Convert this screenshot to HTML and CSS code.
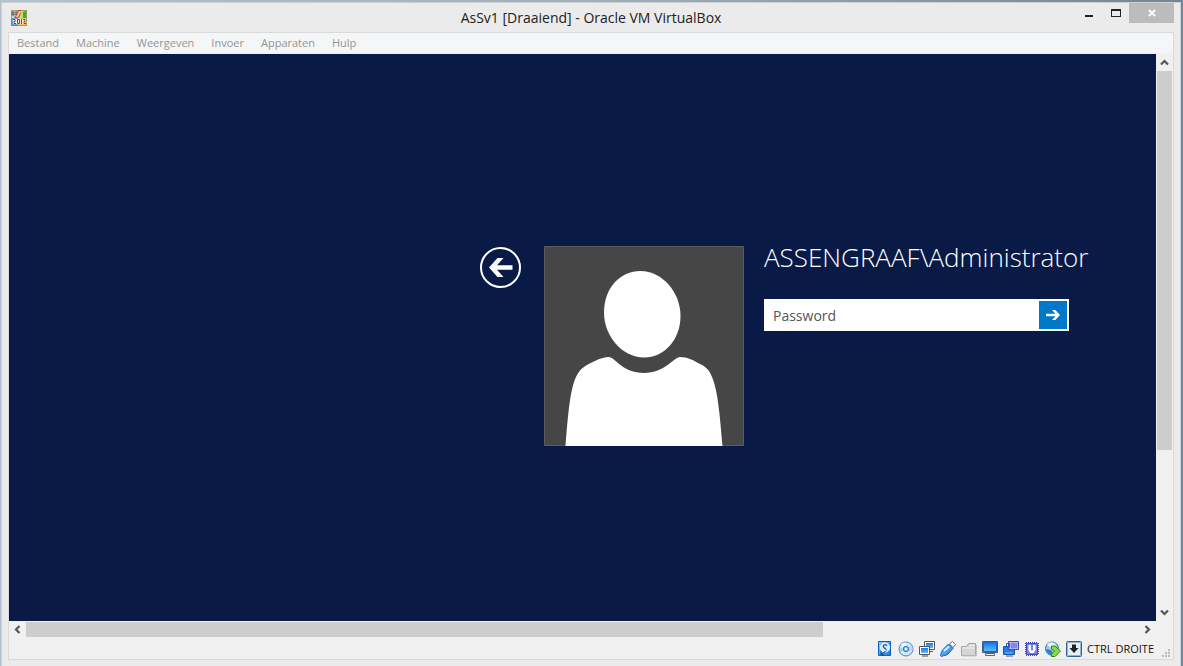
FILE: index.html
```html
<!DOCTYPE html>
<html lang="nl">
<head>
<meta charset="utf-8">
<title>AsSv1 [Draaiend] - Oracle VM VirtualBox</title>
<link rel="stylesheet" href="styles.css">
</head>
<body>
<div class="window">
  <header class="titlebar">
    <svg class="app-icon" width="16" height="16" viewBox="0 0 16 16" aria-hidden="true">
      <rect width="16" height="16" fill="#ecd0b4"/>
      <rect width="7" height="7" fill="#d8d4cf"/>
      <path d="M7 0h5L8 8H3z" fill="#e2552c"/>
      <path d="M8 1l2 0-3 6H5z" fill="#f6c9a8"/>
      <path d="M10 0h6v9H9z" fill="#b5dd78"/>
      <path d="M12 2l3-1v7h-3z" fill="#3fae25"/>
      <path d="M0 8h7v8H0z" fill="#58a8e8"/>
      <path d="M7 9h9v7H7z" fill="#f0c45c"/>
      <path d="M1 2h2v3H1zM4 2h2M4 4h2" fill="none" stroke="#4a4644"/>
      <rect x="2" y="9" width="13" height="5" fill="#fbe9de"/>
      <path d="M2 9.500h2v2H3v2h2M6.500 9.500h2v4h-2zM10.500 9v5M12 9.500h2v2h-1v2h2" fill="none" stroke="#a03434"/>
      <path d="M.5 .5h15v15H.5z" fill="none" stroke="#8a6040" stroke-opacity=".5"/>
    </svg>
    <h1 class="title">AsSv1 [Draaiend] - Oracle VM VirtualBox</h1>
    <div class="window-buttons">
      <button class="win-btn" aria-label="Minimaliseren"><svg width="10" height="10" viewBox="0 0 10 10"><path d="M1 7h8v2H1z" fill="#222"/></svg></button>
      <button class="win-btn" aria-label="Maximaliseren"><svg width="10" height="10" viewBox="0 0 10 10"><path d="M0 1h10v8H0zM1 3v5h8V3z" fill="#222" fill-rule="evenodd"/></svg></button>
      <button class="win-btn close" aria-label="Sluiten"><svg width="8" height="8" viewBox="0 0 8 8"><path d="M.8 .8l6.400 6.400M7.200 .8L.8 7.200" stroke="#fff" stroke-width="1.900"/></svg></button>
    </div>
  </header>
  <div class="frame">
    <nav class="menubar">
      <button>Bestand</button><button>Machine</button><button>Weergeven</button><button>Invoer</button><button>Apparaten</button><button>Hulp</button>
    </nav>
    <div class="viewport">
      <main class="guest">
        <button class="back" aria-label="Back">
          <svg width="42" height="42" viewBox="0 0 42 42"><circle cx="20.500" cy="21.500" r="19.500" fill="none" stroke="#fff" stroke-width="2"/><path d="M9 21.500L17.500 12h6L17 19.200H32.500v4.600H17L23.500 31h-6z" fill="#fff"/></svg>
        </button>
        <svg class="avatar" width="200" height="200" viewBox="0 0 200 200" role="img" aria-label="Administrator">
          <path d="M.5 .5h199v199H.5z" fill="#464646" stroke="#5c5c5c"/>
          <path d="M96.500 25C118 25 136.500 46 136.500 70C136.500 94 120 111.500 100 111.500C78 111.500 60 90 60 66.500C60 42 76 25 96.500 25z" fill="#fff"/>
          <path d="M21.500 200C24 169 26 144 32 131C36 122 42 119 51 115C57 112 61 111 65 111C71 111 78 127 100 127C121 127 130 111 136 111C143 111 149 114 154 117C161 120 165 123 168 131C174 145 176 171 178.500 200z" fill="#fff"/>
        </svg>
        <form class="login">
          <h2 class="user">ASSENGRAAF\Administrator</h2>
          <div class="field">
            <input type="password" placeholder="Password" aria-label="Password">
            <button type="button" class="submit" aria-label="Submit"><svg width="14" height="12" viewBox="0 0 14 12"><path d="M0 4.800h9.500L6 1h3.300L14 6 9.300 11H6l3.500-3.800H0z" fill="#fff"/></svg></button>
          </div>
        </form>
      </main>
      <div class="scroll vertical">
        <button aria-label="Omhoog"><svg width="9" height="7" viewBox="0 0 9 7"><path d="M1 5.500l3.500-3.500L8 5.500" fill="none" stroke="#555" stroke-width="2.200"/></svg></button>
        <div class="track"><div class="thumb"></div></div>
        <button aria-label="Omlaag"><svg width="9" height="7" viewBox="0 0 9 7"><path d="M1 1.500L4.500 5 8 1.500" fill="none" stroke="#555" stroke-width="2.200"/></svg></button>
      </div>
      <div class="scroll horizontal">
        <button aria-label="Links"><svg width="7" height="9" viewBox="0 0 7 9"><path d="M5.500 1L2 4.500 5.500 8" fill="none" stroke="#555" stroke-width="2.200"/></svg></button>
        <div class="track"><div class="thumb"></div></div>
        <button aria-label="Rechts"><svg width="7" height="9" viewBox="0 0 7 9"><path d="M1.500 1L5 4.500 1.500 8" fill="none" stroke="#555" stroke-width="2.200"/></svg></button>
      </div>
    </div>
    <footer class="status">
      <svg width="0" height="0" class="defs" aria-hidden="true">
        <linearGradient id="blue" x1="0" y1="0" x2="1" y2="1"><stop stop-color="#8fceff"/><stop offset="1" stop-color="#1479e6"/></linearGradient>
        <linearGradient id="screen" x1="0" y1="0" x2="0" y2="1"><stop stop-color="#1a78e4"/><stop offset="1" stop-color="#5cbcff"/></linearGradient>
      </svg>
      <svg width="16" height="16" viewBox="0 0 16 16"><path d="M1.500 .5h12v14h-12z" fill="url(#blue)" stroke="#0b62c4"/><circle cx="8" cy="6.500" r="4.500" fill="#cfe8ff" stroke="#fff"/><path d="M10 4.500c-2-2-5 0-3 2s3 2 1 4L4 13.500M4 10v3.500h3" fill="none" stroke="#1457a0" stroke-width="1.200"/><path d="M5 11l4-2" stroke="#fff"/></svg>
      <svg width="16" height="16" viewBox="0 0 16 16"><circle cx="8" cy="8" r="7" fill="#cfe8fc" stroke="#4a86c2"/><path d="M8 8L3 3.500A7 7 0 0 1 8 1.500z" fill="#f8ffff"/><path d="M8 8l6-3a6 6 0 0 1 0 5z" fill="#e4c4ef"/><path d="M8 8l-5.500 3a6 6 0 0 1-.5-4z" fill="#9edcc5"/><circle cx="8" cy="8" r="2.700" fill="#71bcf8" stroke="#2f7bcb"/><circle cx="8" cy="8" r="1.200" fill="#fff"/></svg>
      <svg width="16" height="16" viewBox="0 0 16 16"><path d="M5.500 .5h10v8h-10z" fill="#fff" stroke="#555"/><path d="M7 2h7v5H7z" fill="url(#screen)"/><path d="M9 10.500h5" stroke="#555"/><path d="M.5 5.500h10v8H.5z" fill="#fff" stroke="#555"/><path d="M2 7h7v5H2z" fill="url(#screen)"/><path d="M3 15h6" stroke="#555"/></svg>
      <svg width="16" height="16" viewBox="0 0 16 16"><path d="M9.500 3L12.500 .5l3 3L13 6.500z" fill="#fff" stroke="#666"/><path d="M8.500 3l4.500 4.500-5 5.500c-2 2-4 1-6.500 2.500l-1-1c1-2 .5-4 2.500-6z" fill="url(#blue)" stroke="#0b62c4"/><path d="M4 10l5-4.500" stroke="#d8efff" stroke-width="1.800"/></svg>
      <svg width="16" height="16" viewBox="0 0 16 16"><path d="M.5 14.500v-9h5l2-3h7v12z" fill="#d5d5d5" stroke="#a6a6a6"/><path d="M8 4.500h6M1.500 7h12" stroke="#f1f1f1"/><path d="M15.500 4v11H2" fill="none" stroke="#c4c4c4"/></svg>
      <svg width="16" height="16" viewBox="0 0 16 16"><path d="M.5 .5h15v11H.5z" fill="#fff" stroke="#3c5a80"/><path d="M1.500 1.500h13v9h-13z" fill="url(#screen)" stroke="#0f6fd8"/><path d="M3.500 12.500h9v2h-9z" fill="#eee" stroke="#666"/></svg>
      <svg width="16" height="16" viewBox="0 0 16 16"><path d="M.5 5.500h11v8H.5z" fill="#1f7ee6" stroke="#1a55a0"/><path d="M2 12h8" stroke="#6cc0ff"/><path d="M5.500 .5h10v8h-10z" fill="#b3b3f3" stroke="#4649bf"/><path d="M8 2h6v5H8z" fill="#8386e6"/><path d="M3.500 5V2.500h3v4M3 15h7" stroke="#335b90" fill="none"/></svg>
      <svg width="16" height="16" viewBox="0 0 16 16"><path d="M2 1.500h12M2 14.500h12M1.500 2v12M14.500 2v12" stroke="#3f46b8" stroke-dasharray="1 1"/><path d="M2.500 2.500h11v11h-11z" fill="#7b83e6" stroke="#4148c2"/><path d="M4.500 4h7v5.500L9.500 12h-3l-2-2.500zM7 4v5.500h2V4z" fill="#fff" fill-rule="evenodd"/></svg>
      <svg width="16" height="16" viewBox="0 0 16 16"><circle cx="7" cy="7.500" r="6.500" fill="#97caf5" stroke="#3474ad"/><path d="M2 4c3-4 7-3 9 0L7 7z" fill="#eef7ff"/><path d="M1 8l5 1 3 5-3 .5C3 14 1 11 1 8z" fill="#377fc4"/><path d="M6.500 5h3.500L15.500 10 10 15.500H6.500V13l3-3-3-2z" fill="#86df3c" stroke="#2d8518"/></svg>
      <svg width="16" height="16" viewBox="0 0 16 16"><rect x=".5" y=".5" width="15" height="15" rx="1" fill="#e4f0fa" stroke="#2f6299"/><path d="M1.500 1.500h13v13h-13z" fill="none" stroke="#8fb2d3"/><path d="M6 3.500h4V7h2.500L8 12 3.500 7H6z" fill="#222"/></svg>
      <span class="host-key">CTRL DROITE</span>
      <svg class="grip" width="9" height="9" viewBox="0 0 9 9"><path d="M6 0h2v2H6zM3 3h2v2H3zM6 3h2v2H6zM0 6h2v2H0zM3 6h2v2H3zM6 6h2v2H6z" fill="#bcbcbc"/></svg>
    </footer>
  </div>
</div>
</body>
</html>
```
FILE: styles.css
```css
* { box-sizing: border-box; }

body {
  margin: 0;
  height: 100vh;
  padding: 2px 2px 0 1px;
  display: flex;
  background: linear-gradient(90deg, #b3c1d3, #a0afbd 50%, #6f879b);
  font-family: "Open Sans", "Noto Sans", sans-serif;
  overflow: hidden;
}

button {
  padding: 0;
  border: 0;
  background: none;
  font: inherit;
  color: inherit;
  display: flex;
  align-items: center;
  justify-content: center;
}

svg { display: block; flex: none; }

.window {
  flex: 1;
  min-width: 0;
  display: flex;
  flex-direction: column;
  padding: 0 6px 6px;
  background: #ebebeb;
  border: 1px solid #d0d0d0;
  border-bottom: 0;
}

.titlebar {
  height: 29px;
  display: grid;
  grid-template-columns: 1fr auto 1fr;
  align-items: center;
}

.app-icon { margin-left: 3px; }

.title {
  margin: 0;
  font-size: 14px;
  font-weight: 400;
  color: #222;
  white-space: nowrap;
}

.window-buttons {
  display: flex;
  align-self: start;
  justify-self: end;
}

.win-btn { width: 27px; height: 20px; }
.win-btn.close { width: 45px; background: #bcbcbc; }

.frame {
  flex: 1;
  min-height: 0;
  display: flex;
  flex-direction: column;
  background: #f0f0f0;
  border: 1px solid #d9d9db;
}

.menubar {
  display: flex;
  gap: 17px;
  height: 21px;
  padding: 0 8px 2px;
  background: #f5f6f7;
  border-bottom: 1px solid #f0f0f0;
  color: #949494;
  font-size: 11px;
}

.viewport {
  flex: 1;
  min-height: 0;
  display: grid;
  grid-template: minmax(0, 1fr) 17px / minmax(0, 1fr) 17px;
}

.guest {
  display: flex;
  align-items: flex-start;
  padding: 192px 0 0 471px;
  background: #081a45;
  color: #fff;
  overflow: hidden;
}

.avatar { margin: 0 20px 0 22px; }

.login { margin: 0; }

.user {
  margin: -7px 0 24px;
  font-size: 26px;
  line-height: 36px;
  font-weight: 300;
  white-space: nowrap;
}

.field {
  display: flex;
  width: 305px;
  padding: 2px;
  background: #fff;
}

.field input {
  flex: 1;
  min-width: 0;
  height: 28px;
  padding: 0 7px;
  border: 0;
  outline: 0;
  background: none;
  font: 14px "Open Sans", "Noto Sans", sans-serif;
}

.field input::placeholder { color: #555; opacity: 1; }

.submit { width: 28px; background: #0078ca; }

.scroll { display: flex; }
.vertical { flex-direction: column; padding: 0 1px; }
.horizontal { padding: 1px 0 0; }
.scroll button { flex: none; width: 17px; height: 17px; }
.vertical button { width: 15px; }
.horizontal button { height: 15px; }
.track { flex: 1; }
.thumb { background: #cdcdcd; }
.vertical .thumb { height: 71.2%; }
.horizontal .thumb { width: 71.6%; height: 15px; }

.status {
  display: flex;
  align-items: center;
  justify-content: flex-end;
  gap: 5px;
  height: 21px;
  padding-right: 2px;
}

.defs { position: absolute; }

.host-key {
  font-size: 11px;
  color: #111;
  white-space: nowrap;
}

.grip {
  align-self: flex-end;
  margin: 0 0 1px 3px;
}
```
